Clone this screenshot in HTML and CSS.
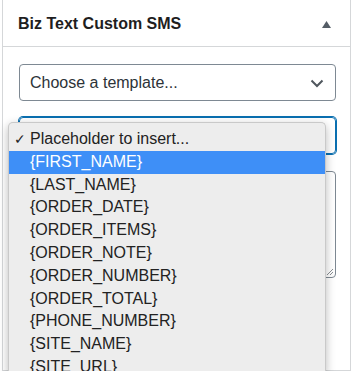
FILE: index.html
```html
<!DOCTYPE html>
<html lang="en">
<head>
  <meta charset="UTF-8" />
  <title>Biz Text Custom SMS</title>
  <link rel="stylesheet" href="styles.css">
</head>
<body>

  <div class="postbox">
    <div class="postbox-header">
      <h2>Biz Text Custom SMS</h2>
      <svg class="toggle" width="9" height="7" viewBox="0 0 9 7"><polygon points="4.5,0 9,7 0,7" fill="#555d66"/></svg>
    </div>

    <div class="inside">
      <div class="select">
        <span>Choose a template...</span>
        <svg class="chevron" width="14" height="9" viewBox="0 0 14 9"><polyline points="1.5,1.5 7,7 12.5,1.5" fill="none" stroke="#50575e" stroke-width="2"/></svg>
      </div>

      <!-- its value is shown by the open menu below -->
      <div class="select focused"></div>

      <div class="textarea">
        <svg class="grip" width="8" height="8" viewBox="0 0 8 8"><path d="M7 1 L1 7 M7 4 L4 7" stroke="#8a8f94" stroke-width="1"/></svg>
      </div>
    </div>

    <!-- native popup menu of the focused select -->
    <ul class="menu">
      <li class="checked">Placeholder to insert...</li>
      <li class="active">{FIRST_NAME}</li>
      <li>{LAST_NAME}</li>
      <li>{ORDER_DATE}</li>
      <li>{ORDER_ITEMS}</li>
      <li>{ORDER_NOTE}</li>
      <li>{ORDER_NUMBER}</li>
      <li>{ORDER_TOTAL}</li>
      <li>{PHONE_NUMBER}</li>
      <li>{SITE_NAME}</li>
      <li>{SITE_URL}</li>
    </ul>
  </div>

</body>
</html>
```

FILE: styles.css
```css
/* Reset and Base */
* {
  box-sizing: border-box;
  margin: 0;
  padding: 0;
}

body {
  font-family: 'Liberation Sans', Arial, sans-serif;
  background: #fff;
  color: #1e1e1e;
}

/* Meta box */
.postbox {
  position: relative;
  width: 349px;
  height: 372px;
  margin: -1px 0 0 2px;
  border: 1px solid #d5d7d9;
  background: #fff;
}

.postbox-header {
  display: flex;
  align-items: center;
  justify-content: space-between;
  height: 47px;
  padding: 0 19px 0 15px;
  border-bottom: 1px solid #d5d7d9;
}

.postbox-header h2 {
  font-size: 16px;
  font-weight: bold;
  color: #1e1e1e;
  padding-top: 1px;
}

.toggle {
  margin-top: 2px;
}

.inside {
  padding: 17px 0 0 16px;
}

/* Form fields */
.select {
  display: flex;
  align-items: center;
  justify-content: space-between;
  width: 317px;
  height: 37px;
  padding: 0 11px 0 10px;
  border: 1px solid #7e8993;
  border-radius: 4px;
  font-size: 16px;
  color: #2c3338;
  margin-bottom: 16px;
}

.select.focused {
  border-color: #0a6fb0;
  box-shadow: 0 0 0 1px #0a6fb0;
  margin-bottom: 17px;
}

.chevron {
  margin-top: 1px;
}

.textarea {
  position: relative;
  width: 317px;
  height: 107px;
  border: 1px solid #7e8993;
  border-radius: 4px;
}

.grip {
  position: absolute;
  right: 1px;
  bottom: 1px;
}

/* Popup menu */
.menu {
  position: absolute;
  left: 5px;
  top: 122px;
  width: 318px;
  height: 251px;
  overflow: hidden;
  padding-top: 5px;
  list-style: none;
  background: #ededed;
  border: 1px solid #c9c9c9;
  border-bottom: none;
  border-radius: 5px 5px 0 0;
  box-shadow: 0 3px 10px rgba(0, 0, 0, 0.28);
  font-size: 16px;
  color: #222;
}

.menu li {
  position: relative;
  height: 22.8px;
  line-height: 22.8px;
  padding-left: 21px;
}

.menu li.checked::before {
  content: "✓";
  position: absolute;
  left: 5px;
  font-size: 14px;
}

.menu li.active {
  background: #3e8ff7;
  color: #fff;
}
```
